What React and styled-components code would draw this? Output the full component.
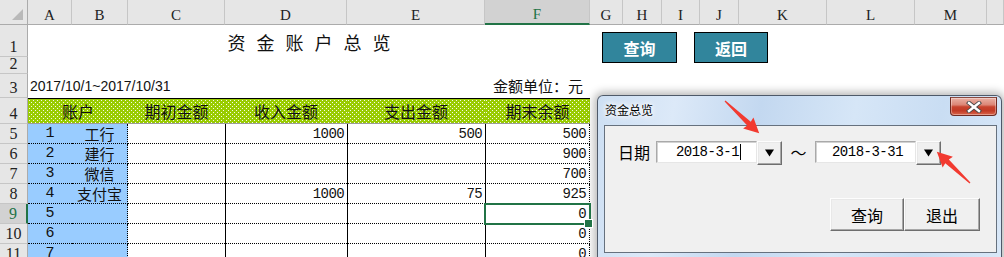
import React from 'react';
import styled, { createGlobalStyle, css } from 'styled-components';

const GlobalStyle = createGlobalStyle`
  html, body { margin: 0; padding: 0; background: #fff; }
  body { width: 1004px; height: 257px; overflow: hidden; font-family: "Liberation Sans", "Noto Sans CJK SC", sans-serif; }
  * { box-sizing: border-box; }
`;

const CJK = `"Noto Sans CJK SC", sans-serif`;
const MONO = `"Liberation Mono", "Noto Sans CJK SC", monospace`;
const HEAD = `"Liberation Serif", "Noto Sans CJK SC", serif`;

const COLS = [28, 44, 56, 97, 122, 138, 105, 33, 39, 38, 39, 88, 88, 72, 17];
const LETTERS = ['A', 'B', 'C', 'D', 'E', 'F', 'G', 'H', 'I', 'J', 'K', 'L', 'M', ''];

const Page = styled.div`
  position: relative;
  width: 1004px;
  height: 257px;
  overflow: hidden;
  background: #fff;
`;

const Sheet = styled.div`
  display: grid;
  grid-template-columns: ${COLS.map((c) => c + 'px').join(' ')};
  grid-template-rows: 25px 32px 17px 24px 26px repeat(7, 20px);
`;

const Corner = styled.div`
  position: relative;
  background: #e6e6e6;
  border-right: 1px solid #ababab;
  border-bottom: 1px solid #ababab;
  &::after {
    content: '';
    position: absolute;
    right: 4px;
    bottom: 4px;
    border-left: 11px solid transparent;
    border-bottom: 11px solid #b9b9b9;
  }
`;

const ColHead = styled.div`
  display: flex;
  align-items: flex-end;
  justify-content: center;
  background: ${(p) => (p.$selected ? '#d2d2d2' : '#e6e6e6')};
  border-right: 1px solid #c6c6c6;
  border-bottom: ${(p) => (p.$selected ? '2px solid #217346' : '1px solid #ababab')};
  color: ${(p) => (p.$selected ? '#217346' : '#222')};
  font: 15px/18px ${HEAD};
`;

const RowHead = styled.div`
  display: flex;
  align-items: flex-end;
  justify-content: center;
  background: ${(p) => (p.$selected ? '#d2d2d2' : '#e6e6e6')};
  border-right: ${(p) => (p.$selected ? '2px solid #217346' : '1px solid #ababab')};
  border-bottom: 1px solid #c6c6c6;
  color: ${(p) => (p.$selected ? '#217346' : '#222')};
  font: 16px/19px ${HEAD};
`;

const Filler = styled.div`
  grid-column: span ${(p) => p.$span};
`;

const TitleCell = styled.div`
  grid-column: span 6;
  display: flex;
  align-items: center;
  justify-content: center;
  padding: 2px 0 0 11px;
  font: 18px/22px ${CJK};
  letter-spacing: 11px;
  color: #111;
`;

const InfoCell = styled.div`
  grid-column: span 6;
  display: flex;
  align-items: flex-end;
  justify-content: space-between;
  padding: 0 7px 3px 2px;
  color: #111;
`;

const RangeText = styled.span`
  font: 14px/18px "Liberation Sans", sans-serif;
`;

const UnitText = styled.span`
  font: 15px/19px ${CJK};
`;

const greenDots = css`
  background-color: #99cc00;
  background-image:
    conic-gradient(at 1px 1px, transparent 75%, rgba(255, 255, 255, 0.9) 0),
    conic-gradient(at 1px 1px, transparent 75%, rgba(255, 255, 255, 0.9) 0);
  background-size: 4px 4px;
  background-position: 1px 1px, 3px 3px;
`;

const HeadCell = styled.div`
  grid-column: span ${(p) => p.$span || 1};
  ${greenDots};
  border-top: 1px solid #000;
  border-bottom: 1px solid #9a9a9a;
  display: flex;
  align-items: center;
  justify-content: center;
  font: 16px/20px ${CJK};
  color: #111;
`;

const BodyCell = styled.div`
  position: relative;
  display: flex;
  align-items: flex-end;
  border-bottom: 1px dotted #000;
  color: #111;
`;

const NoCell = styled(BodyCell)`
  background: #99ccff;
  justify-content: center;
  font: 15px/18px ${MONO};
`;

const NameCell = styled(BodyCell)`
  background: #99ccff;
  justify-content: center;
  align-items: center;
  border-right: 1px dotted #000;
  font: 15px/17px ${CJK};
`;

const AmtCell = styled(BodyCell)`
  justify-content: flex-end;
  padding-right: 3px;
  font: 14px/18px ${MONO};
  letter-spacing: -0.6px;
  ${(p) => p.$lead && 'border-left: 1px solid #000;'}
  ${(p) => p.$last && 'border-right: 1px dotted #000;'}
  ${(p) =>
    p.$selected &&
    css`
      &::after {
        content: '';
        position: absolute;
        top: -1px;
        left: -2px;
        right: -2px;
        bottom: -2px;
        border: 2px solid #217346;
        z-index: 2;
      }
      &::before {
        content: '';
        position: absolute;
        right: -4px;
        bottom: -5px;
        width: 7px;
        height: 7px;
        background: #217346;
        border: 1px solid #fff;
        z-index: 3;
      }
    `}
`;

const SheetButton = styled.div`
  position: absolute;
  top: 32px;
  left: ${(p) => p.$x}px;
  width: ${(p) => p.$w}px;
  height: 31px;
  background: #31859c;
  border: 1px solid #000;
  color: #fff;
  font: bold 16px/20px ${CJK};
  display: flex;
  align-items: center;
  justify-content: center;
`;

/* ---------- Dialog ---------- */

const Dialog = styled.div`
  position: absolute;
  left: 597px;
  top: 95px;
  width: 405px;
  height: 175px;
  display: flex;
  flex-direction: column;
  padding: 0 4px 0 6px;
  border: 1px solid rgba(45, 55, 70, 0.8);
  border-radius: 6px 6px 0 0;
  background: linear-gradient(
    100deg,
    #cddff3 0%,
    #dce9f8 18%,
    #c3d8f0 38%,
    #d6e6f7 60%,
    #c9ddf3 80%,
    #d9e8f8 100%
  );
  box-shadow: 0 0 9px 3px rgba(0, 0, 0, 0.28);
`;

const TitleBar = styled.div`
  height: 29px;
  display: flex;
  justify-content: space-between;
  align-items: flex-start;
`;

const TitleText = styled.div`
  padding: 7px 0 0 1px;
  font: 12px/14px ${CJK};
  color: #000;
  text-shadow: 0 0 4px #fff, 0 0 6px #fff, 0 0 8px #fff;
`;

const CloseButton = styled.div`
  margin-top: 1px;
  width: 47px;
  height: 19px;
  border: 1px solid #6e2a22;
  border-top-color: #8a4a40;
  border-radius: 0 0 4px 4px;
  background: linear-gradient(
    180deg,
    #eab1a5 0%,
    #dc8676 40%,
    #c8432e 52%,
    #c23a25 75%,
    #d9664c 100%
  );
  box-shadow: inset 0 0 0 1px rgba(255, 255, 255, 0.35);
  display: flex;
  align-items: center;
  justify-content: center;
`;

const Client = styled.div`
  height: 128px;
  background: #f0f0f0;
  border: 1px solid #66717e;
  display: flex;
  flex-direction: column;
  padding: 15px 16px 0 13px;
`;

const DateRow = styled.div`
  display: flex;
  align-items: flex-start;
`;

const Label = styled.div`
  width: 38px;
  font: 16px/22px ${CJK};
  color: #000;
`;

const TextBox = styled.div`
  width: 101px;
  height: 22px;
  background: #fff;
  border: 1px solid #a9a9a9;
  border-right-color: #e6e6e6;
  border-bottom-color: #e6e6e6;
  box-shadow: inset 1px 1px 0 #d2d2d2;
  display: flex;
  align-items: center;
  justify-content: center;
  padding-left: 4px;
  font: 14px/18px ${MONO};
  letter-spacing: -0.5px;
  color: #000;
`;

const Caret = styled.span`
  display: inline-block;
  width: 1px;
  height: 16px;
  margin-left: 1px;
  background: #000;
`;

const raised = css`
  background: #f0f0f0;
  border: 1px solid;
  border-color: #fdfdfd #6e6e6e #6e6e6e #fdfdfd;
  box-shadow: inset -1px -1px 0 #a8a8a8, inset 1px 1px 0 #e8e8e8;
`;

const DropButton = styled.div`
  ${raised};
  width: 25px;
  height: 24px;
  display: flex;
  align-items: center;
  justify-content: center;
`;

const Tilde = styled.div`
  width: 33px;
  text-align: center;
  font: 16px/22px ${CJK};
  color: #000;
`;

const ButtonRow = styled.div`
  margin-top: 33px;
  display: flex;
  justify-content: flex-end;
`;

const DlgButton = styled.div`
  ${raised};
  width: ${(p) => p.$w}px;
  height: 33px;
  display: flex;
  align-items: center;
  justify-content: center;
  font: 16px/20px ${CJK};
  color: #000;
`;

const Overlay = styled.svg`
  position: absolute;
  left: 0;
  top: 0;
  pointer-events: none;
`;

function arrowPoints(L) {
  const hl = 15;
  const hw = 7.5;
  const sw = 2.6;
  return `0,-0.6 ${L - hl + 1},${-sw} ${L - hl},${-hw} ${L},0 ${L - hl},${hw} ${L - hl + 1},${sw} 0,0.6`;
}

const Triangle = () => (
  <svg width="9" height="8" viewBox="0 0 9 8">
    <polygon points="0,0.5 9,0.5 4.5,7.5" fill="#000" />
  </svg>
);

const rows = [
  { n: '1', name: '工行', c: '', d: '1000', e: '500', f: '500' },
  { n: '2', name: '建行', c: '', d: '', e: '', f: '900' },
  { n: '3', name: '微信', c: '', d: '', e: '', f: '700' },
  { n: '4', name: '支付宝', c: '', d: '1000', e: '75', f: '925' },
  { n: '5', name: '', c: '', d: '', e: '', f: '0', sel: true },
  { n: '6', name: '', c: '', d: '', e: '', f: '0' },
  { n: '7', name: '', c: '', d: '', e: '', f: '0' },
];

export default function App() {
  return (
    <>
      <GlobalStyle />
      <Page>
        <Sheet>
          <Corner />
          {LETTERS.map((l, i) => (
            <ColHead key={i} $selected={l === 'F'}>
              {l}
            </ColHead>
          ))}

          <RowHead>1</RowHead>
          <TitleCell>资金账户总览</TitleCell>
          <Filler $span={8} />

          <RowHead>2</RowHead>
          <Filler $span={14} />

          <RowHead>3</RowHead>
          <InfoCell>
            <RangeText>2017/10/1~2017/10/31</RangeText>
            <UnitText>金额单位：元</UnitText>
          </InfoCell>
          <Filler $span={8} />

          <RowHead>4</RowHead>
          <HeadCell $span={2}>账户</HeadCell>
          <HeadCell>期初金额</HeadCell>
          <HeadCell>收入金额</HeadCell>
          <HeadCell>支出金额</HeadCell>
          <HeadCell>期末余额</HeadCell>
          <Filler $span={8} />

          {rows.map((r, i) => (
            <React.Fragment key={i}>
              <RowHead $selected={r.sel}>{i + 5}</RowHead>
              <NoCell>{r.n}</NoCell>
              <NameCell>{r.name}</NameCell>
              <AmtCell>{r.c}</AmtCell>
              <AmtCell $lead>{r.d}</AmtCell>
              <AmtCell $lead>{r.e}</AmtCell>
              <AmtCell $lead $last $selected={r.sel}>
                {r.f}
              </AmtCell>
              <Filler $span={8} />
            </React.Fragment>
          ))}
        </Sheet>

        <SheetButton $x={602} $w={75}>查询</SheetButton>
        <SheetButton $x={694} $w={74}>返回</SheetButton>

        <Dialog>
          <TitleBar>
            <TitleText>资金总览</TitleText>
            <CloseButton>
              <svg width="16" height="12" viewBox="0 0 16 12">
                <path d="M3 2 L13 10 M13 2 L3 10" stroke="#4a4a4a" strokeWidth="4.2" strokeLinecap="square" />
                <path d="M3 2 L13 10 M13 2 L3 10" stroke="#fff" strokeWidth="2.4" strokeLinecap="square" />
              </svg>
            </CloseButton>
          </TitleBar>
          <Client>
            <DateRow>
              <Label>日期</Label>
              <TextBox>
                2018-3-1
                <Caret />
              </TextBox>
              <DropButton>
                <Triangle />
              </DropButton>
              <Tilde>～</Tilde>
              <TextBox>2018-3-31</TextBox>
              <DropButton>
                <Triangle />
              </DropButton>
            </DateRow>
            <ButtonRow>
              <DlgButton $w={74}>查询</DlgButton>
              <DlgButton $w={76}>退出</DlgButton>
            </ButtonRow>
          </Client>
        </Dialog>

        <Overlay width="1004" height="257" viewBox="0 0 1004 257">
          <polygon points={arrowPoints(47)} transform="translate(725 101) rotate(43.3)" fill="#f23a30" />
          <polygon points={arrowPoints(45.5)} transform="translate(970 183) rotate(-136.8)" fill="#f23a30" />
        </Overlay>
      </Page>
    </>
  );
}
